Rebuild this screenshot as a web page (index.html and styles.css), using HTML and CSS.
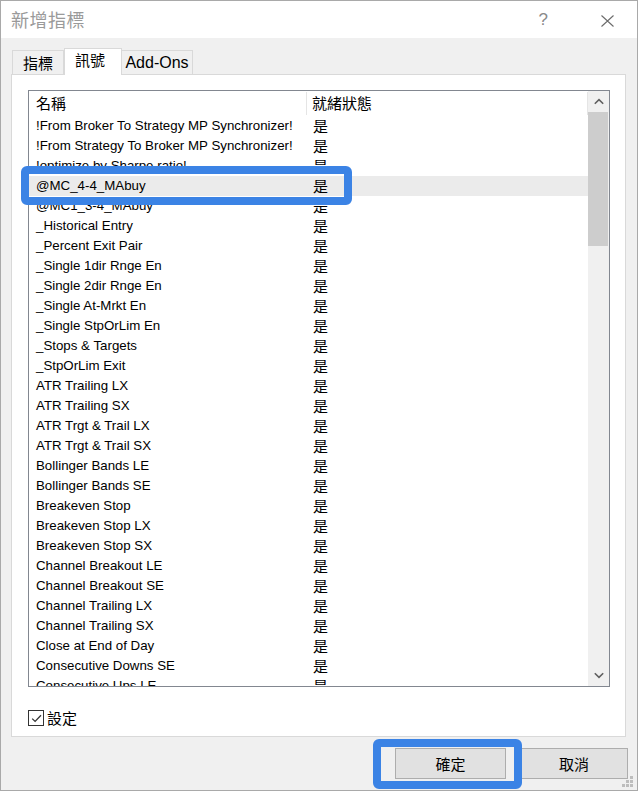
FILE: index.html
```html
<!DOCTYPE html>
<html lang="zh-Hant">
<head>
<meta charset="utf-8">
<title>新增指標</title>
<link rel="stylesheet" href="styles.css">
</head>
<body>
<div class="window">
  <div class="titlebar">
    <span class="title">新增指標</span>
    <span class="help">?</span>
    <span class="close">
      <svg width="13" height="12" viewBox="0 0 13 12"><path d="M0.5 0.5 L12.5 11.5 M12.5 0.5 L0.5 11.5" stroke="#6b6b6b" stroke-width="1.1" fill="none"/></svg>
    </span>
  </div>

  <div class="tabstrip">
    <div class="tab tab-a">指標</div>
    <div class="tab tab-b active">訊號</div>
    <div class="tab tab-c">Add-Ons</div>
  </div>

  <div class="panel">
    <div class="listbox">
      <div class="listmain">
        <div class="header">
          <div class="hcol1">名稱</div>
          <div class="hcol2">就緒狀態</div>
        </div>
        <div class="rows">
          <div class="row"><span class="c1">!From Broker To Strategy MP Synchronizer!</span><span class="c2">是</span></div>
          <div class="row"><span class="c1">!From Strategy To Broker MP Synchronizer!</span><span class="c2">是</span></div>
          <div class="row"><span class="c1">!optimize by Sharpe ratio!</span><span class="c2">是</span></div>
          <div class="row selected"><span class="c1">@MC_4-4_MAbuy</span><span class="c2">是</span></div>
          <div class="row"><span class="c1">@MC1_3-4_MAbuy</span><span class="c2">是</span></div>
          <div class="row"><span class="c1">_Historical Entry</span><span class="c2">是</span></div>
          <div class="row"><span class="c1">_Percent Exit Pair</span><span class="c2">是</span></div>
          <div class="row"><span class="c1">_Single 1dir Rnge En</span><span class="c2">是</span></div>
          <div class="row"><span class="c1">_Single 2dir Rnge En</span><span class="c2">是</span></div>
          <div class="row"><span class="c1">_Single At-Mrkt En</span><span class="c2">是</span></div>
          <div class="row"><span class="c1">_Single StpOrLim En</span><span class="c2">是</span></div>
          <div class="row"><span class="c1">_Stops &amp; Targets</span><span class="c2">是</span></div>
          <div class="row"><span class="c1">_StpOrLim Exit</span><span class="c2">是</span></div>
          <div class="row"><span class="c1">ATR Trailing LX</span><span class="c2">是</span></div>
          <div class="row"><span class="c1">ATR Trailing SX</span><span class="c2">是</span></div>
          <div class="row"><span class="c1">ATR Trgt &amp; Trail LX</span><span class="c2">是</span></div>
          <div class="row"><span class="c1">ATR Trgt &amp; Trail SX</span><span class="c2">是</span></div>
          <div class="row"><span class="c1">Bollinger Bands LE</span><span class="c2">是</span></div>
          <div class="row"><span class="c1">Bollinger Bands SE</span><span class="c2">是</span></div>
          <div class="row"><span class="c1">Breakeven Stop</span><span class="c2">是</span></div>
          <div class="row"><span class="c1">Breakeven Stop LX</span><span class="c2">是</span></div>
          <div class="row"><span class="c1">Breakeven Stop SX</span><span class="c2">是</span></div>
          <div class="row"><span class="c1">Channel Breakout LE</span><span class="c2">是</span></div>
          <div class="row"><span class="c1">Channel Breakout SE</span><span class="c2">是</span></div>
          <div class="row"><span class="c1">Channel Trailing LX</span><span class="c2">是</span></div>
          <div class="row"><span class="c1">Channel Trailing SX</span><span class="c2">是</span></div>
          <div class="row"><span class="c1">Close at End of Day</span><span class="c2">是</span></div>
          <div class="row"><span class="c1">Consecutive Downs SE</span><span class="c2">是</span></div>
          <div class="row"><span class="c1">Consecutive Ups LE</span><span class="c2">是</span></div>
        </div>
      </div>
      <div class="scrollbar">
        <div class="sbtn">
          <svg width="10" height="7" viewBox="0 0 10 7"><path d="M0.8 5.8 L5 1.6 L9.2 5.8" stroke="#606060" stroke-width="1.6" fill="none"/></svg>
        </div>
        <div class="strack"><div class="sthumb"></div></div>
        <div class="sbtn">
          <svg width="10" height="7" viewBox="0 0 10 7"><path d="M0.8 1.2 L5 5.4 L9.2 1.2" stroke="#606060" stroke-width="1.6" fill="none"/></svg>
        </div>
      </div>
    </div>

    <label class="check">
      <span class="box">
        <svg width="13" height="13" viewBox="0 0 13 13"><path d="M2.2 6.6 L5.1 9.4 L11 3.2" stroke="#333" stroke-width="1.3" fill="none"/></svg>
      </span>
      <span class="checklabel">設定</span>
    </label>
  </div>

  <div class="footer">
    <button class="btn btn-ok">確定</button>
    <button class="btn btn-cancel">取消</button>
  </div>

  <div class="grip">
    <svg width="12" height="12" viewBox="0 0 12 12" fill="#bdbdbd">
      <rect x="8" y="0" width="3" height="3"/>
      <rect x="4" y="4" width="3" height="3"/><rect x="8" y="4" width="3" height="3"/>
      <rect x="0" y="8" width="3" height="3"/><rect x="4" y="8" width="3" height="3"/><rect x="8" y="8" width="3" height="3"/>
    </svg>
  </div>

  <div class="mark mark-row"></div>
  <div class="mark mark-btn"></div>
</div>
</body>
</html>
```

FILE: styles.css
```css
* { box-sizing: border-box; }

html, body {
  margin: 0;
  padding: 0;
  background: #f0f0f0;
}

body {
  font-family: "Liberation Sans", Arial, "Noto Sans CJK TC", sans-serif;
  font-size: 13.3px;
  color: #000;
}

.window {
  position: relative;
  width: 638px;
  height: 791px;
  border: 1px solid #a9a9a9;
  background: #f0f0f0;
  overflow: hidden;
}

.titlebar {
  height: 37px;
  background: #fff;
  display: flex;
  align-items: center;
  padding-left: 10px;
}

.title {
  font-family: "Noto Sans CJK TC", sans-serif;
  font-size: 18px;
  color: #9a9a9a;
  letter-spacing: 0.5px;
  line-height: 1;
  margin-top: -1px;
}

.help {
  margin-left: auto;
  font-family: "Liberation Sans", sans-serif;
  font-size: 17px;
  color: #8a8a8a;
  margin-right: 53px;
  margin-top: 1px;
}

.close {
  display: flex;
  margin-right: 23px;
  margin-top: 2px;
}

.tabstrip {
  display: flex;
  align-items: flex-end;
  height: 26px;
  margin-top: 10px;
  padding-left: 11px;
  position: relative;
  z-index: 2;
}

.tab {
  height: 24px;
  border: 1px solid #d9d9d9;
  border-bottom: none;
  background: #f0f0f0;
  font-family: "Noto Sans CJK TC", sans-serif;
  font-size: 15px;
  display: flex;
  align-items: center;
  justify-content: center;
  line-height: 1;
  padding-bottom: 1px;
}

.tab-a { width: 52px; }
.tab-b { width: 58px; }
.tab-c {
  width: 72px;
  margin-left: -1px;
  font-family: "Liberation Sans", sans-serif;
  font-size: 16px;
  padding-top: 1px;
  padding-bottom: 0;
}

.tab.active {
  height: 27px;
  background: #fff;
  margin-bottom: -1px;
  align-items: flex-start;
  padding-top: 3px;
  padding-right: 6px;
}

.panel {
  position: relative;
  z-index: 1;
  margin-left: 10px;
  width: 615px;
  height: 663px;
  border: 1px solid #d9d9d9;
  background: #fff;
  padding: 15px 0 0 16px;
}

.listbox {
  width: 582px;
  height: 597px;
  border: 1px solid #828790;
  display: flex;
}

.listmain {
  flex: 1;
  display: flex;
  flex-direction: column;
  overflow: hidden;
}

.header {
  height: 25px;
  display: flex;
  align-items: center;
  flex-shrink: 0;
  font-family: "Noto Sans CJK TC", sans-serif;
  font-size: 15px;
  line-height: 1;
}

.hcol1 {
  width: 278px;
  padding-left: 7px;
  height: 23px;
  display: flex;
  align-items: center;
  border-right: 1px solid #e5e5e5;
  padding-bottom: 2px;
}

.hcol2 {
  flex: 1;
  padding-left: 5px;
  height: 23px;
  display: flex;
  align-items: center;
  border-right: 1px solid #e5e5e5;
  padding-bottom: 2px;
}

.rows {
  flex: 1;
  overflow: hidden;
}

.row {
  height: 20px;
  display: flex;
  align-items: center;
  white-space: nowrap;
  padding-bottom: 1px;
}

.row.selected { background: #ebebeb; }

.c1 {
  width: 278px;
  padding-left: 7px;
}

.c2 {
  padding-left: 6px;
  font-family: "Noto Sans CJK TC", sans-serif;
  font-size: 15px;
  line-height: 1;
}

.scrollbar {
  width: 21px;
  background: #f0f0f0;
  display: flex;
  flex-direction: column;
  flex-shrink: 0;
}

.sbtn {
  height: 21px;
  display: flex;
  align-items: center;
  justify-content: center;
  padding-left: 1px;
}

.strack {
  flex: 1;
  padding: 0 1px 0 0;
}

.sthumb {
  height: 134px;
  background: #cdcdcd;
}

.check {
  display: flex;
  align-items: center;
  margin-top: 23px;
  gap: 3px;
}

.box {
  width: 16px;
  height: 16px;
  border: 1px solid #333;
  background: #fff;
  display: flex;
  align-items: center;
  justify-content: center;
}

.checklabel {
  font-family: "Noto Sans CJK TC", sans-serif;
  font-size: 15px;
  line-height: 1;
  padding-bottom: 1px;
}

.footer {
  display: flex;
  padding-left: 394px;
  margin-top: 11px;
  gap: 14px;
}

.btn {
  height: 31px;
  background: #e1e1e1;
  border: 1px solid #adadad;
  font-family: "Noto Sans CJK TC", sans-serif;
  font-size: 15px;
  color: #000;
  padding: 0;
  line-height: 1;
}

.btn-ok { width: 111px; }
.btn-cancel { width: 108px; }

.grip {
  position: absolute;
  right: 3px;
  bottom: 2px;
  display: flex;
}

.mark {
  position: absolute;
  border: 8px solid #3b83e5;
  border-radius: 6px;
  z-index: 5;
}

.mark-row {
  left: 20px;
  top: 165px;
  width: 331px;
  height: 39px;
}

.mark-btn {
  left: 372px;
  top: 738px;
  width: 149px;
  height: 50px;
}
```
